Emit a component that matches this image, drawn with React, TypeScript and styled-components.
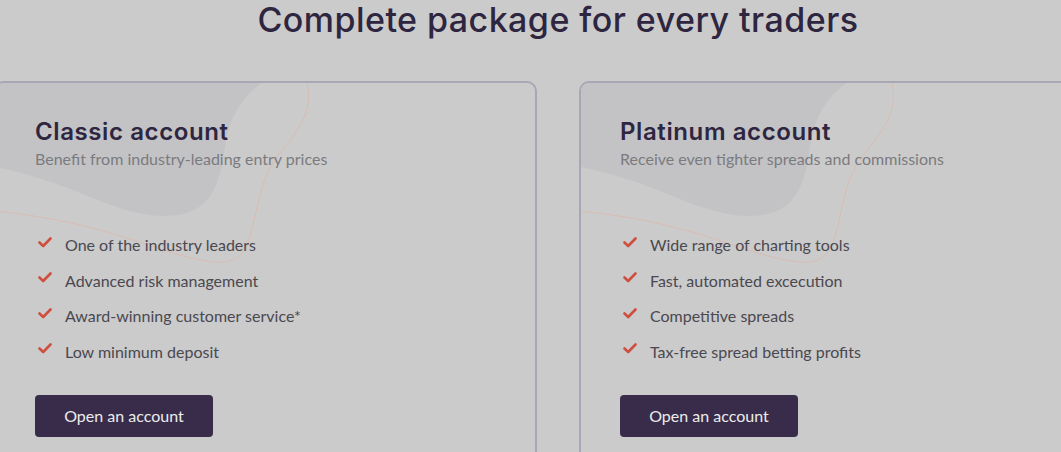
import * as React from 'react';
import styled, { createGlobalStyle } from 'styled-components';

const GlobalStyle = createGlobalStyle`
  html, body {
    margin: 0;
    background: #cbcbcb;
    overflow: hidden;
  }
`;

interface IPlan {
  title: string;
  subtitle: string;
  features: string[];
}

const plans: IPlan[] = [
  {
    title: 'Classic account',
    subtitle: 'Benefit from industry-leading entry prices',
    features: [
      'One of the industry leaders',
      'Advanced risk management',
      'Award-winning customer service*',
      'Low minimum deposit',
    ],
  },
  {
    title: 'Platinum account',
    subtitle: 'Receive even tighter spreads and commissions',
    features: [
      'Wide range of charting tools',
      'Fast, automated excecution',
      'Competitive spreads',
      'Tax-free spread betting profits',
    ],
  },
];

const Page = styled.div`
  width: 1128px;
  margin-left: -6px;
  font-family: Lato, 'Liberation Sans', sans-serif;
`;

const Heading = styled.h2`
  margin: 0;
  text-align: center;
  font-family: Inter, 'Noto Sans', sans-serif;
  font-weight: 500;
  font-size: 34px;
  line-height: 40px;
  letter-spacing: 0.45px;
  color: #2e2640;
`;

const Cards = styled.div`
  display: grid;
  grid-template-columns: 543px 543px;
  gap: 42px;
  margin-top: 41px;
`;

const Card = styled.div`
  position: relative;
  overflow: hidden;
  height: 420px;
  border: 2px solid #a9a7b6;
  border-radius: 10px;
  padding: 34px 39px 0;
`;

// decorative background shapes in the card corner
const Decor = styled.svg`
  position: absolute;
  left: 0;
  top: 0;
  pointer-events: none;
`;

const Content = styled.div`
  position: relative;
`;

const Title = styled.h3`
  margin: 0;
  font-family: Inter, 'Noto Sans', sans-serif;
  font-weight: 600;
  font-size: 24px;
  line-height: 30px;
  letter-spacing: 0.6px;
  color: #2e2640;
`;

const Subtitle = styled.p`
  margin: 2px 0 0;
  font-size: 16px;
  line-height: 20px;
  color: #7b7b7f;
`;

const List = styled.ul`
  list-style: none;
  margin: 65px 0 0;
  padding: 0;
  display: flex;
  flex-direction: column;
  gap: 13.6px;
`;

const Item = styled.li`
  display: flex;
  align-items: center;
  gap: 13px;
  font-size: 16px;
  line-height: 22px;
  color: #4a4850;
`;

const Check = styled.svg`
  flex: none;
  margin-left: 3px;
  margin-top: -6px;
`;

const Button = styled.button`
  margin-top: 32px;
  width: 178px;
  height: 42px;
  border: 0;
  border-radius: 4px;
  background: #392c4a;
  color: #ececec;
  font-family: Lato, 'Liberation Sans', sans-serif;
  font-size: 16px;
  cursor: pointer;
`;

const CardDecor = () => (
  <Decor width="360" height="280" viewBox="0 0 360 280">
    <path
      d="M0 0 H265 C240 20 232 40 228 70 C222 110 210 132 170 133 C120 134 80 100 0 84 Z"
      fill="#c3c3c6"
    />
    <path
      d="M311 0 C318 30 300 50 280 75 C262 100 262 130 252 160 C242 185 220 180 200 176 C150 165 110 140 0 128"
      fill="none"
      stroke="#d9bcb2"
      strokeWidth="1"
    />
  </Decor>
);

const PlanCard = ({ plan }: { plan: IPlan }) => (
  <Card>
    <CardDecor />
    <Content>
      <Title>{plan.title}</Title>
      <Subtitle>{plan.subtitle}</Subtitle>
      <List>
        {plan.features.map((f) => (
          <Item key={f}>
            <Check width="14" height="11" viewBox="0 0 14 11">
              <path
                d="M1.5 5.5 L5.2 9 L12.5 1.5"
                fill="none"
                stroke="#cf4f3f"
                strokeWidth="2.6"
                strokeLinecap="round"
                strokeLinejoin="round"
              />
            </Check>
            {f}
          </Item>
        ))}
      </List>
      <Button>Open an account</Button>
    </Content>
  </Card>
);

const App = () => (
  <Page>
    <GlobalStyle />
    <Heading>Complete package for every traders</Heading>
    <Cards>
      {plans.map((p) => (
        <PlanCard key={p.title} plan={p} />
      ))}
    </Cards>
  </Page>
);

export default App;
